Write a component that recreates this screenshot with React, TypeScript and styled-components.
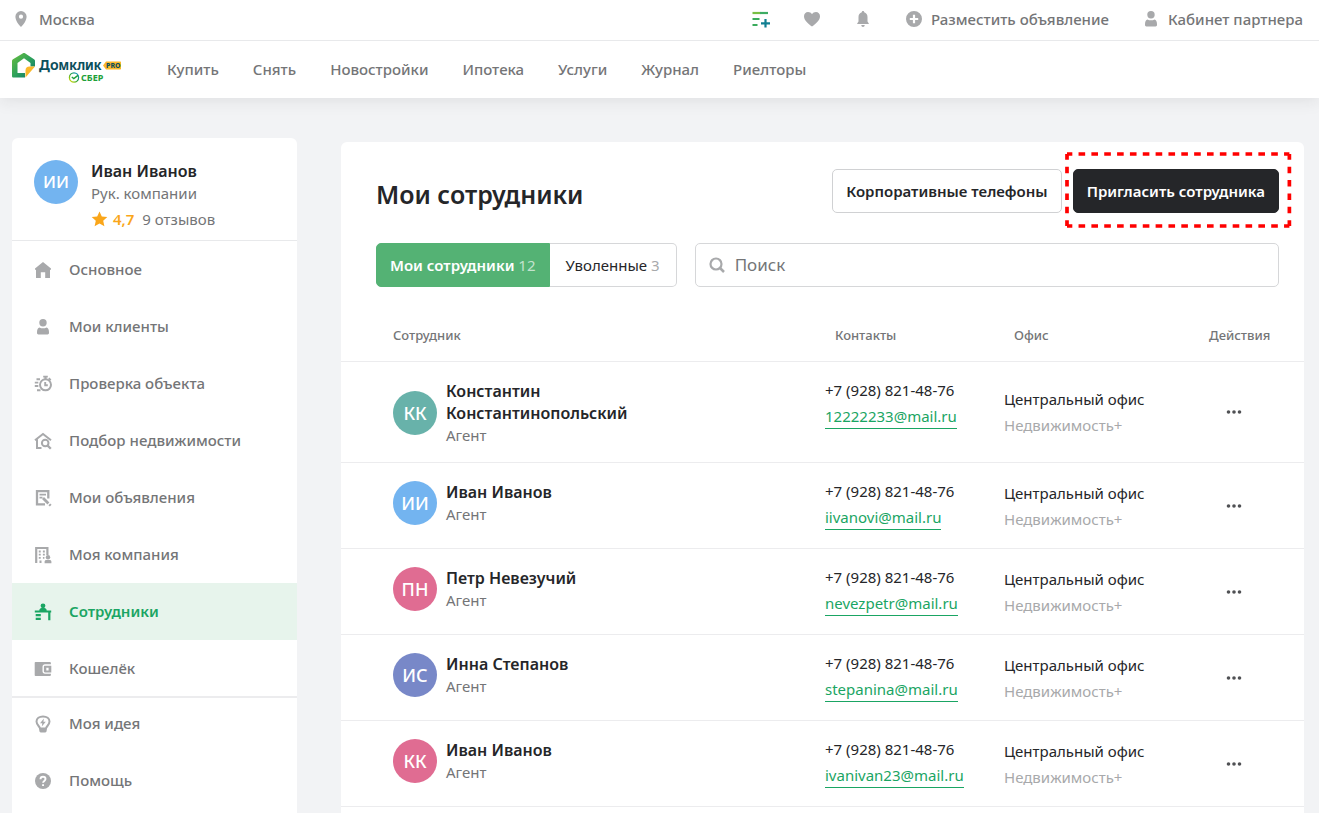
import React from 'react';
import styled, { createGlobalStyle, css } from 'styled-components';

const GlobalStyle = createGlobalStyle`
  * { box-sizing: border-box; }
  body {
    margin: 0;
    background: #f2f3f5;
    color: #252629;
    font-family: "Noto Sans", "Open Sans", sans-serif;
    font-size: 15px;
    line-height: 22px;
  }
  button, input { font: inherit; color: inherit; }
  a { color: inherit; text-decoration: none; }
  svg { display: block; flex: none; }
`;

const Page = styled.div`
  min-height: 100vh;
  overflow: hidden;
`;

const Header = styled.header`
  position: relative;
  background: #fff;
  color: #747577;
  font-weight: 500;
  box-shadow: 0 2px 16px rgba(37, 38, 41, 0.1);
`;

const TopBar = styled.div`
  display: flex;
  align-items: center;
  justify-content: space-between;
  height: 41px;
  padding: 0 16px 3px 12px;
  border-bottom: 1px solid #e8e9eb;
`;

const TopGroup = styled.div`
  display: flex;
  align-items: center;
  gap: 33px;
`;

const TopButton = styled.button<{ $gap?: number }>`
  display: flex;
  align-items: center;
  gap: ${p => p.$gap ?? 8}px;
  padding: 0;
  border: 0;
  background: none;
  cursor: pointer;
`;

const NavBar = styled.div`
  display: flex;
  align-items: center;
  height: 57px;
  padding: 0 12px;
  gap: 46px;
`;

const MainNav = styled.nav`
  display: flex;
  gap: 34px;
  padding-bottom: 2px;
`;

const Logo = styled.a`
  display: block;
  width: 109px;
  height: 34px;
`;

const Layout = styled.div`
  display: flex;
  align-items: flex-start;
  gap: 44px;
  padding: 40px 15px 0 12px;
`;

const Sidebar = styled.aside`
  flex: none;
  width: 285px;
  padding-bottom: 24px;
  border-radius: 6px;
  background: #fff;
`;

const Profile = styled.div`
  display: flex;
  gap: 13px;
  height: 103px;
  padding: 22px 22px 0;
  border-bottom: 1px solid #e8e9eb;
`;

const Avatar = styled.div<{ $color: string; $size?: number }>`
  display: flex;
  align-items: center;
  justify-content: center;
  flex: none;
  width: 44px;
  height: 44px;
  border-radius: 50%;
  background: ${p => p.$color};
  color: #fff;
  font-size: ${p => p.$size ?? 18}px;
  font-weight: 500;
`;

const Name = styled.div`
  font-size: 16px;
  font-weight: 600;
`;

const Role = styled.div`
  color: #747577;
`;

const Rating = styled.div`
  display: flex;
  align-items: center;
  gap: 5px;
  margin-top: 4px;
  color: #747577;

  strong {
    margin-right: 3px;
    color: #faa61a;
    font-weight: 600;
  }
`;

const SideNav = styled.nav`
  display: flex;
  flex-direction: column;
`;

const SideLink = styled.a<{ $active?: boolean }>`
  display: flex;
  align-items: center;
  gap: 17px;
  height: 57px;
  padding: 0 22px;
  color: #747577;
  font-weight: 500;

  svg { color: #a8a9ab; }

  ${p => p.$active && css`
    background: #e7f4ec;
    color: #1aa563;
    font-weight: 600;
    svg { color: #1aa563; }
  `}
`;

const SideLabel = styled.span`
  padding-bottom: 2px;
`;

const Divider = styled.hr`
  height: 2px;
  margin: -1px 0 -3px;
  border: 0;
  background: #ececee;
`;

const Panel = styled.main`
  flex: 1;
  min-width: 0;
  margin-top: 4px;
  padding-bottom: 32px;
  border-radius: 6px;
  background: #fff;
`;

const PanelHead = styled.div`
  display: flex;
  align-items: center;
  gap: 11px;
  padding: 27px 25px 0 35px;
`;

const Title = styled.h1`
  flex: 1;
  margin: 0;
  padding-top: 6px;
  font-size: 25px;
  line-height: 32px;
  font-weight: 600;
`;

const Button = styled.button<{ $dark?: boolean }>`
  height: 44px;
  padding: 0 13px 1px;
  border: 1px solid ${p => (p.$dark ? '#252629' : '#d0d1d3')};
  border-radius: 5px;
  background: ${p => (p.$dark ? '#252629' : '#fff')};
  color: ${p => (p.$dark ? '#fff' : '#252629')};
  font-weight: 600;
  white-space: nowrap;
  cursor: pointer;
`;

const Highlighted = styled.div`
  position: relative;
`;

const HighlightFrame = styled.svg`
  position: absolute;
  top: -15px;
  left: -6px;
  width: calc(100% + 16px);
  height: calc(100% + 28px);
  overflow: visible;
  stroke: #ff0000;
  pointer-events: none;
`;

const Toolbar = styled.div`
  display: flex;
  gap: 18px;
  padding: 30px 25px 22px 35px;
`;

const Tabs = styled.div`
  display: flex;
`;

const Tab = styled.button<{ $active?: boolean }>`
  height: 44px;
  padding: 0 16px;
  border: 1px solid #d6d7d9;
  border-left: 0;
  border-radius: 0 5px 5px 0;
  background: #fff;
  white-space: nowrap;
  cursor: pointer;

  span { color: #a8a9ab; }

  ${p => p.$active && css`
    padding: 0 13px;
    border: 1px solid #54b274;
    border-radius: 5px 0 0 5px;
    background: #54b274;
    color: #fff;
    font-weight: 600;
    span { color: #c3e3ce; font-weight: 400; }
  `}
`;

const Search = styled.label`
  display: flex;
  align-items: center;
  flex: 1;
  gap: 9px;
  min-width: 0;
  height: 44px;
  padding: 0 12px;
  border: 1px solid #d6d7d9;
  border-radius: 5px;
  color: #a8a9ab;

  input {
    flex: 1;
    min-width: 0;
    padding: 0;
    border: 0;
    outline: 0;
    background: none;
    color: #252629;
    font-size: 17px;
  }
  input::placeholder { color: #747577; opacity: 1; }
`;

const Table = styled.table`
  width: 100%;
  table-layout: fixed;
  border-collapse: separate;
  border-spacing: 0;
`;

const Col = styled.col<{ $width?: number }>`
  ${p => p.$width && `width: ${p.$width}px;`}
`;

const HeadCell = styled.th<{ $first?: boolean }>`
  height: 53px;
  padding: 0 0 0 ${p => (p.$first ? 52 : 10)}px;
  border-bottom: 1px solid #ececee;
  color: #747577;
  font-size: 13px;
  font-weight: 500;
  text-align: left;
`;

const Cell = styled.td<{ $kind?: 'person' | 'contacts' | 'actions' }>`
  height: 86px;
  padding: 0;
  border-bottom: 1px solid #ececee;
  vertical-align: middle;

  ${p => p.$kind === 'person' && 'padding: 18px 160px 16px 52px; vertical-align: top;'}
  ${p => p.$kind === 'contacts' && 'padding-top: 16px; vertical-align: top;'}
  ${p => p.$kind === 'actions' && 'padding-left: 10px;'}
`;

const Person = styled.div`
  display: flex;
  align-items: center;
  gap: 9px;
`;

const Line = styled.div<{ $muted?: boolean }>`
  line-height: 26px;
  color: ${p => (p.$muted ? '#a8a9ab' : '#252629')};
`;

const Phone = styled.div`
  line-height: 24px;
`;

const Email = styled.a`
  display: inline-block;
  margin-top: 2px;
  border-bottom: 1px solid #1aa563;
  color: #1aa563;
  line-height: 24px;
`;

const MoreButton = styled.button`
  display: flex;
  align-items: center;
  justify-content: center;
  width: 50px;
  height: 32px;
  padding: 0;
  border: 0;
  background: none;
  color: #505154;
  cursor: pointer;
`;

type IconProps = { children: React.ReactNode; size?: number };

const Icon = ({ children, size = 18 }: IconProps) => (
  <svg width={size} height={size} viewBox="0 0 18 18" fill="currentColor" aria-hidden="true">
    {children}
  </svg>
);

const PersonShape = () => (
  <>
    <circle cx="9" cy="4.700" r="3.700" />
    <path d="M3 14.300c0-2.800.9-4.600 2.500-4.900 1 .6 2.200.9 3.500.9s2.500-.3 3.500-.9c1.600.3 2.500 2.100 2.500 4.900v.8c0 .9-.6 1.400-1.400 1.400H4.400c-.8 0-1.400-.5-1.400-1.400z" />
  </>
);

const sideIcons = {
  home: <path d="M9 1 1 7.500v1.300h1V17h4.800v-5.800h4.400V17H16V8.800h1V7.500z" />,
  client: <PersonShape />,
  check: (
    <>
      <circle cx="11.500" cy="9.800" r="5.500" fill="none" stroke="currentColor" strokeWidth="2" />
      <path d="M9.200.8h4.600v1.600h-1.200v2h-2.200v-2H9.200zM15.400 2.600l2 1.800-1.300 1.300-2-1.800z" />
      <path d="M11.200 7v3.300h2.600M2.500 4.200H6M.8 7.600h3.500M.8 11h3.500M3 15.200h3.500" fill="none" stroke="currentColor" strokeWidth="1.900" />
    </>
  ),
  pick: (
    <>
      <path d="M1 8.200 9 2l8 6.200M3 7.500V16h4.500" fill="none" stroke="currentColor" strokeWidth="2" />
      <circle cx="11.200" cy="11" r="3.300" fill="none" stroke="currentColor" strokeWidth="2" />
      <path d="m13.400 13.400 3.400 3.400" stroke="currentColor" strokeWidth="2.300" />
    </>
  ),
  ads: (
    <>
      <path d="M14.300 9.500V2.200H3v13.200h8" fill="none" stroke="currentColor" strokeWidth="2.300" />
      <path d="M5.500 5.600h6.500M5.500 8.600h3" stroke="currentColor" strokeWidth="1.800" />
      <path d="m9 9 5.400 5.400" stroke="currentColor" strokeWidth="2.800" />
      <path d="m15.300 15.300 1.400 1.400" stroke="currentColor" strokeWidth="2.400" />
    </>
  ),
  company: (
    <>
      <path d="M2.200 17V2h11.200v7" fill="none" stroke="currentColor" strokeWidth="2.200" />
      <path d="M4.800 4.500h1.900v1.900H4.800zM8.900 4.500h1.900v1.900H8.900zM4.800 7.700h1.900v1.900H4.800zM8.900 7.700h1.900v1.900H8.900zM4.800 10.900h1.900v1.900H4.800zM8.900 10.900h1.500v1.900H8.900zM5.500 14.500h2v2.500h-2z" />
      <circle cx="14" cy="11.300" r="2.200" />
      <path d="M10.600 17.200v-1.500c0-1 .8-1.700 1.800-1.700h3.200c1 0 1.800.7 1.800 1.700v1.500z" />
    </>
  ),
  staff: (
    <>
      <circle cx="9" cy="2.800" r="2.400" />
      <path d="M5.300 7.500c0-1.800 1.400-2.400 3.700-2.400s3.700.6 3.700 2.400zM.8 7.400h16.400v2.200H16.400v7.600h-2.200V9.600H.8z" />
      <path d="M1.700 11h5.100v2.300H1.700zM1.700 14.700h5.100V17H1.700z" />
    </>
  ),
  wallet: (
    <>
      <path d="M1.500 2h14c.9 0 1.400.5 1.400 1.300v1H11C9.500 4.300 8.500 5.300 8.500 6.800v4.500c0 1.500 1 2.500 2.500 2.500h5.900v1c0 .8-.5 1.300-1.400 1.300h-14c-.5 0-.8-.3-.8-.8V2.800c0-.5.3-.8.800-.8z" />
      <path fillRule="evenodd" d="M11 5.700h6.300v6.700H11c-.7 0-1.100-.4-1.100-1.100V6.800c0-.7.4-1.100 1.100-1.100zm1.300 2v2.700h2.300V7.700z" />
    </>
  ),
  idea: (
    <>
      <path d="M6 13.500c0-2-3.500-3.500-3.500-6.900C2.500 3.500 5.300 1.400 9 1.400s6.500 2.100 6.500 5.200c0 3.400-3.500 4.900-3.500 6.900z" fill="none" stroke="currentColor" strokeWidth="2" />
      <path d="M5.300 13.600h7.400v1.800c0 1.400-1 2.200-2.200 2.200h-3c-1.200 0-2.200-.8-2.200-2.200zM9.900 3.500 6 8.300h2.300l-.5 3.300 4-4.900H9.400z" />
    </>
  ),
  help: (
    <>
      <circle cx="9" cy="9" r="8" />
      <path d="M6.500 7.200C6.500 5.600 7.600 4.800 9 4.800s2.500.8 2.500 2.200c0 1.900-2.400 1.900-2.400 3.800" fill="none" stroke="#fff" strokeWidth="1.900" />
      <path d="M8.100 12.200H10v1.900H8.100z" fill="#fff" />
    </>
  ),
};

const LogoMark = () => (
  <svg width="109" height="34" viewBox="0 0 109 34" role="img" aria-label="Домклик Pro Сбер">
    <defs>
      <linearGradient id="house" x1="0" y1="0" x2="1" y2="1">
        <stop offset="0" stopColor="#6cbf3c" />
        <stop offset="0.500" stopColor="#2fa35a" />
        <stop offset="1" stopColor="#0b6f72" />
      </linearGradient>
      <linearGradient id="ring" x1="0" y1="1" x2="1" y2="0">
        <stop offset="0" stopColor="#f2e600" />
        <stop offset="0.500" stopColor="#21a038" />
        <stop offset="1" stopColor="#1090e0" />
      </linearGradient>
    </defs>
    <path fill="url(#house)" fillRule="evenodd" d="M11 .3c.7-.4 1.300-.4 2 0l9 6c.8.500 1 1 1 1.800v5.400h-4.500V10L12 5.200 5.500 10v10H13v4.500H1.500C.6 24.500 0 24 0 23V8.100c0-.8.3-1.300 1-1.800z" />
    <path fill="#fbb829" d="M23 13.500 13.500 24.500v-7c0-2.500 1.500-4 4-4z" />
    <text x="27" y="17" fontFamily="Noto Sans" fontSize="14" fontWeight="700" fill="#0b4f5c">Д</text>
    <text x="38" y="17" fontFamily="Noto Sans" fontSize="11" fontWeight="800" fill="#0b4f5c">ОМКЛИК</text>
    <path fill="#fbb829" d="m91 12.500 3-4h14c.6 0 1 .4 1 1v6c0 .6-.4 1-1 1H94z" />
    <text x="94" y="15" fontFamily="Noto Sans" fontSize="7" fontWeight="800" fill="#0b4f5c">PRO</text>
    <circle cx="62" cy="24.500" r="4.600" fill="none" stroke="url(#ring)" strokeWidth="1.300" />
    <path d="m59.800 24 2 1.600 4.200-3.200" fill="none" stroke="#21a038" strokeWidth="1.400" />
    <text x="69" y="28" fontFamily="Noto Sans" fontSize="9" fontWeight="700" fill="#21a038">СБЕР</text>
  </svg>
);

const mainNav = ['Купить', 'Снять', 'Новостройки', 'Ипотека', 'Услуги', 'Журнал', 'Риелторы'];

type SideItem = { icon: keyof typeof sideIcons; label: string; active?: boolean };

const primaryItems: SideItem[] = [
  { icon: 'home', label: 'Основное' },
  { icon: 'client', label: 'Мои клиенты' },
  { icon: 'check', label: 'Проверка объекта' },
  { icon: 'pick', label: 'Подбор недвижимости' },
  { icon: 'ads', label: 'Мои объявления' },
  { icon: 'company', label: 'Моя компания' },
  { icon: 'staff', label: 'Сотрудники', active: true },
  { icon: 'wallet', label: 'Кошелёк' },
];

const secondaryItems: SideItem[] = [
  { icon: 'idea', label: 'Моя идея' },
  { icon: 'help', label: 'Помощь' },
];

const employees = [
  { initials: 'КК', color: '#68b2aa', name: 'Константин Константинопольский', email: '12222233@mail.ru' },
  { initials: 'ИИ', color: '#73b4f0', name: 'Иван Иванов', email: 'iivanovi@mail.ru' },
  { initials: 'ПН', color: '#e06c92', name: 'Петр Невезучий', email: 'nevezpetr@mail.ru' },
  { initials: 'ИС', color: '#7888c8', name: 'Инна Степанов', email: 'stepanina@mail.ru' },
  { initials: 'КК', color: '#e06c92', name: 'Иван Иванов', email: 'ivanivan23@mail.ru' },
];

const SideList = ({ items }: { items: SideItem[] }) => (
  <SideNav>
    {items.map(item => (
      <SideLink key={item.label} href="#" $active={item.active}>
        <Icon>{sideIcons[item.icon]}</Icon>
        <SideLabel>{item.label}</SideLabel>
      </SideLink>
    ))}
  </SideNav>
);

export default function App() {
  return (
    <Page>
      <GlobalStyle />
      <Header>
        <TopBar>
          <TopButton $gap={9}>
            <Icon>
              <path fillRule="evenodd" d="M9 1a5.600 5.600 0 0 0-5.600 5.600C3.400 10.500 6.600 15 9 17c2.400-2 5.600-6.500 5.600-10.400A5.600 5.600 0 0 0 9 1zm0 3.600a2.100 2.100 0 1 1 0 4.200 2.100 2.100 0 0 1 0-4.200z" fill="#a8a9ab" />
            </Icon>
            Москва
          </TopButton>
          <TopGroup>
            <TopButton aria-label="Сравнение">
              <svg width="18" height="18" viewBox="0 0 18 18" fill="none" strokeWidth="2.200" aria-hidden="true">
                <path d="M.5 3h8" stroke="#78bf43" />
                <path d="M8 3h8" stroke="#3dac64" />
                <path d="M.5 9h7M.5 15h5" stroke="#3aab5c" />
                <path d="M13.500 9v8.500M9 13.300h9" stroke="#117f92" />
              </svg>
            </TopButton>
            <TopButton aria-label="Избранное">
              <Icon><path d="M9 16.500C5 13.800 1 10.300 1 6.300 1 3.800 2.800 2 5 2c1.700 0 3.200.9 4 2.300C9.800 2.900 11.300 2 13 2c2.200 0 4 1.800 4 4.300 0 4-4 7.500-8 10.200z" fill="#a8a9ab" /></Icon>
            </TopButton>
            <TopButton aria-label="Уведомления">
              <Icon><path d="M9 1c.7 0 1.200.5 1.200 1.200C12.300 2.800 13.500 4.500 13.500 7v4.500l1.300 2V14H3.200v-.5l1.300-2V7c0-2.500 1.200-4.200 3.300-4.800C7.800 1.500 8.300 1 9 1zM7.300 15h3.400c0 1.300-.7 2-1.700 2s-1.700-.7-1.700-2z" fill="#a8a9ab" /></Icon>
            </TopButton>
            <TopButton>
              <Icon><path fillRule="evenodd" d="M9 1a8 8 0 1 1 0 16A8 8 0 0 1 9 1zM7.900 4.800v3.100H4.800v2.200h3.100v3.100h2.200v-3.100h3.100V7.900h-3.100V4.800z" fill="#a8a9ab" /></Icon>
              Разместить объявление
            </TopButton>
            <TopButton>
              <svg width="18" height="18" viewBox="0 0 18 18" fill="#a8a9ab" aria-hidden="true"><PersonShape /></svg>
              Кабинет партнера
            </TopButton>
          </TopGroup>
        </TopBar>
        <NavBar>
          <Logo href="#"><LogoMark /></Logo>
          <MainNav>
            {mainNav.map(label => <a key={label} href="#">{label}</a>)}
          </MainNav>
        </NavBar>
      </Header>

      <Layout>
        <Sidebar>
          <Profile>
            <Avatar $color="#73b4f0" $size={17}>ИИ</Avatar>
            <div>
              <Name>Иван Иванов</Name>
              <Role>Рук. компании</Role>
              <Rating>
                <svg width="17" height="16" viewBox="0 0 17 16" fill="#faa61a" aria-hidden="true">
                  <path d="m8.500.5 2.300 5 5.500.6-4.100 3.700 1.200 5.400-4.900-2.800-4.900 2.800 1.200-5.400L.7 6.100l5.500-.6z" />
                </svg>
                <strong>4,7</strong>
                9 отзывов
              </Rating>
            </div>
          </Profile>
          <SideList items={primaryItems} />
          <Divider />
          <SideList items={secondaryItems} />
        </Sidebar>

        <Panel>
          <PanelHead>
            <Title>Мои сотрудники</Title>
            <Button>Корпоративные телефоны</Button>
            <Highlighted>
              <Button $dark>Пригласить сотрудника</Button>
              <HighlightFrame strokeWidth="3.700" aria-hidden="true">
                <g strokeDasharray="6.600 6.200" strokeDashoffset="1.300">
                  <line x1="0" y1="0" x2="100%" y2="0" pathLength="221.600" />
                  <line x1="0" y1="100%" x2="100%" y2="100%" pathLength="221.600" />
                </g>
                <g strokeDasharray="6.500 6.900" strokeDashoffset="0.700">
                  <line x1="0" y1="0" x2="0" y2="100%" pathLength="72.100" />
                  <line x1="100%" y1="0" x2="100%" y2="100%" pathLength="72.100" />
                </g>
              </HighlightFrame>
            </Highlighted>
          </PanelHead>

          <Toolbar>
            <Tabs>
              <Tab $active>Мои сотрудники <span>12</span></Tab>
              <Tab>Уволенные <span>3</span></Tab>
            </Tabs>
            <Search>
              <svg width="18" height="18" viewBox="0 0 18 18" fill="none" stroke="currentColor" strokeWidth="2.200" aria-hidden="true">
                <circle cx="8" cy="8" r="5.500" />
                <path d="m12 12 4 4" strokeWidth="2.500" />
              </svg>
              <input type="search" placeholder="Поиск" aria-label="Поиск" />
            </Search>
          </Toolbar>

          <Table>
            <colgroup>
              <Col />
              <Col $width={179} />
              <Col $width={195} />
              <Col $width={105} />
            </colgroup>
            <thead>
              <tr>
                <HeadCell $first>Сотрудник</HeadCell>
                <HeadCell>Контакты</HeadCell>
                <HeadCell>Офис</HeadCell>
                <HeadCell>Действия</HeadCell>
              </tr>
            </thead>
            <tbody>
              {employees.map(e => (
                <tr key={e.email}>
                  <Cell $kind="person">
                    <Person>
                      <Avatar $color={e.color}>{e.initials}</Avatar>
                      <div>
                        <Name>{e.name}</Name>
                        <Role>Агент</Role>
                      </div>
                    </Person>
                  </Cell>
                  <Cell $kind="contacts">
                    <Phone>+7 (928) 821-48-76</Phone>
                    <Email href={`mailto:${e.email}`}>{e.email}</Email>
                  </Cell>
                  <Cell>
                    <Line>Центральный офис</Line>
                    <Line $muted>Недвижимость+</Line>
                  </Cell>
                  <Cell $kind="actions">
                    <MoreButton aria-label="Действия">
                      <svg width="16" height="4" viewBox="0 0 16 4" fill="currentColor" aria-hidden="true">
                        <circle cx="2.500" cy="2" r="1.800" />
                        <circle cx="8" cy="2" r="1.800" />
                        <circle cx="13.500" cy="2" r="1.800" />
                      </svg>
                    </MoreButton>
                  </Cell>
                </tr>
              ))}
            </tbody>
          </Table>
        </Panel>
      </Layout>
    </Page>
  );
}
